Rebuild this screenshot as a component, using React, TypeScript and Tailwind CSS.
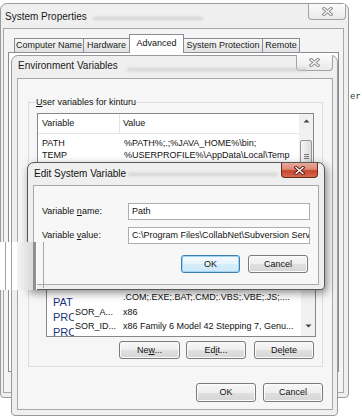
import React from "react";

const font = "font-['Liberation_Sans',Arial,sans-serif]";

function XGlyph({ red = false }: { red?: boolean }) {
  return (
    <svg width="11" height="9" viewBox="0 0 11 9">
      <path
        d="M2 1.5 L9 7.5 M9 1.5 L2 7.5"
        stroke={red ? "#5a1a10" : "#8c8c8c"}
        strokeWidth="3.2"
        strokeLinecap="square"
        fill="none"
      />
      <path
        d="M2 1.5 L9 7.5 M9 1.5 L2 7.5"
        stroke={red ? "#ffffff" : "#f6f6f6"}
        strokeWidth="1.4"
        strokeLinecap="square"
        fill="none"
      />
    </svg>
  );
}

function CloseBtn({ className }: { className: string }) {
  return (
    <div
      className={`${className} flex items-center justify-center rounded-b-[4px] border border-t-0 border-[#a3a3a3] bg-[linear-gradient(to_bottom,#fbfbfb,#e9e9e9)]`}
    >
      <XGlyph />
    </div>
  );
}

function RedClose({ className }: { className: string }) {
  return (
    <div
      className={`${className} flex items-center justify-center rounded-b-[4px] border border-t-0 border-[#6b2a1c] bg-[linear-gradient(to_bottom,#e9a99b_0%,#dc8a76_45%,#c7452c_55%,#d36a52_100%)]`}
    >
      <XGlyph red />
    </div>
  );
}

function Smudge({ className }: { className: string }) {
  return (
    <span
      className={`absolute h-[3px] rounded-full bg-[#c4c4c4] opacity-70 blur-[1.5px] ${className}`}
    />
  );
}

function Tab({
  className,
  children,
  selected = false,
}: {
  className: string;
  children: React.ReactNode;
  selected?: boolean;
}) {
  return (
    <div
      className={`${className} -ml-px flex items-center justify-center whitespace-nowrap border border-[#898c95] text-[9px] leading-[11px] ${
        selected
          ? "relative z-10 h-[19px] border-b-0 bg-white pb-[2px] text-[#111]"
          : "h-[15px] bg-[linear-gradient(to_bottom,#f6f6f6,#e2e2e2)] text-[#222]"
      }`}
    >
      {children}
    </div>
  );
}

function Btn({
  className,
  children,
  def = false,
}: {
  className: string;
  children: React.ReactNode;
  def?: boolean;
}) {
  return (
    <div
      className={`${className} flex items-center justify-center rounded-[3px] border text-[9px] leading-[11px] text-[#111] ${
        def
          ? "border-[#3c7fb1] bg-[linear-gradient(to_bottom,#f4fbff_0%,#e6f4fc_50%,#d6edfa_50%,#cde8f8_100%)] shadow-[inset_0_0_0_1px_#9fd4f3]"
          : "border-[#7a7a7a] bg-[linear-gradient(to_bottom,#f7f7f7_0%,#eeeeee_50%,#e0e0e0_50%,#d6d6d6_100%)] shadow-[inset_0_0_0_1px_#fbfbfb]"
      }`}
    >
      {children}
    </div>
  );
}

function UpArrow() {
  return (
    <svg width="7" height="4" viewBox="0 0 7 4">
      <path d="M0.5 3.5 L3.5 0.5 L6.5 3.5 Z" fill="#404040" />
    </svg>
  );
}

function DownArrow() {
  return (
    <svg width="7" height="4" viewBox="0 0 7 4">
      <path d="M0.5 0.5 L3.5 3.5 L6.5 0.5 Z" fill="#404040" />
    </svg>
  );
}

function SystemProperties() {
  return (
    <div className="absolute left-0 top-[3px] flex h-[395px] w-[349px] flex-col rounded-t-[7px] rounded-b-[4px] border border-[#9a9a9a] bg-[#efefef]">
      <div className="relative flex h-[24px] items-start">
        <span className="ml-[4px] mt-[7px] text-[10px] leading-[12px] text-[#1a1a1a]">
          System Properties
        </span>
        <Smudge className="left-[92px] top-[13px] w-[110px]" />
        <CloseBtn className="ml-auto mr-[2px] h-[16px] w-[38px]" />
      </div>
      <div className="ml-[2px] h-[365px] w-[341px] border border-[#a8a8a8] bg-[#f4f4f4]">
        <div className="ml-[11px] mt-[5px] flex h-[19px] items-end">
          <Tab className="w-[70px]">Computer Name</Tab>
          <Tab className="w-[47px]">Hardware</Tab>
          <Tab className="w-[55px]" selected>
            Advanced
          </Tab>
          <Tab className="w-[80px]">System Protection</Tab>
          <Tab className="w-[38px]">Remote</Tab>
        </div>
        <div className="-mt-px ml-[4px] h-[320px] w-[331px] border border-[#898c95] bg-white" />
      </div>
    </div>
  );
}

function EnvVars() {
  return (
    <div className="absolute left-[11px] top-[55px] flex h-[361px] w-[327px] flex-col rounded-t-[7px] rounded-b-[4px] border border-[#9a9a9a] bg-[#efefef]">
      <div className="relative flex h-[22px] items-start">
        <span className="ml-[6px] mt-[4px] text-[10px] leading-[12px] text-[#1a1a1a]">
          Environment Variables
        </span>
        <Smudge className="left-[115px] top-[12px] w-[180px]" />
        <CloseBtn className="-mt-px ml-auto mr-[4px] h-[16px] w-[37px]" />
      </div>
      <div className="ml-[5px] flex h-[332px] w-[316px] flex-col border border-[#a8a8a8] bg-[#f6f6f6]">
        {/* user variables */}
        <div className="relative ml-[10px] mt-[23px] h-[76px] w-[295px] shrink-0 border border-[#d5dfe5]">
          <span className="absolute left-[6px] top-[-7px] bg-[#f6f6f6] px-px text-[9px] leading-[12px]">
            <span className="underline">U</span>ser variables for kinturu
          </span>
          <div className="ml-[8px] mt-[10px] flex h-[62px] w-[277px] border border-[#828790] bg-white">
            <div className="flex flex-1 flex-col">
              <div className="flex h-[20px] border-b border-[#e5e5e5]">
                <div className="flex w-[82px] items-center border-r border-[#e5e5e5] pl-[4px]">
                  Variable
                </div>
                <div className="flex items-center pl-[3px]">Value</div>
              </div>
              <div className="pt-[3px]">
                <div className="flex h-[12px] items-center">
                  <span className="w-[86px] pl-[4px]">PATH</span>
                  <span>%PATH%;.;%JAVA_HOME%\bin;</span>
                </div>
                <div className="flex h-[12px] items-center">
                  <span className="w-[86px] pl-[4px]">TEMP</span>
                  <span>%USERPROFILE%\AppData\Local\Temp</span>
                </div>
              </div>
            </div>
            <div className="flex w-[14px] flex-col items-center bg-[#f0f0f0]">
              <div className="flex h-[17px] items-center justify-center">
                <UpArrow />
              </div>
              <div className="mt-[11px] flex h-[40px] w-[12px] flex-col items-center justify-center gap-[1px] rounded-[2px] border border-[#959595] bg-[linear-gradient(to_right,#f4f4f4,#dcdcdc)]">
                <span className="h-px w-[5px] bg-[#777]" />
                <span className="h-px w-[5px] bg-[#777]" />
                <span className="h-px w-[5px] bg-[#777]" />
              </div>
            </div>
          </div>
        </div>

        {/* system variables */}
        <div className="ml-[10px] mt-[10px] flex h-[179px] w-[295px] shrink-0 flex-col border border-[#d5dfe5]">
          <div className="relative ml-[17px] mt-[43px] flex h-[105px] w-[270px] overflow-hidden border border-[#828790] bg-white">
            <div className="flex flex-1 flex-col justify-end pb-[3px]">
              <div className="flex h-[15px] items-center">
                <span className="w-[76px]" />
                <span className="whitespace-nowrap">.COM;.EXE;.BAT;.CMD;.VBS;.VBE;.JS;....</span>
              </div>
              <div className="flex h-[14px] items-center">
                <span className="w-[76px] pl-[28px]">SOR_A...</span>
                <span>x86</span>
              </div>
              <div className="flex h-[14px] items-center">
                <span className="w-[76px] pl-[28px]">SOR_ID...</span>
                <span className="whitespace-nowrap">x86 Family 6 Model 42 Stepping 7, Genu...</span>
              </div>
            </div>
            <div className="flex w-[14px] flex-col items-center justify-end bg-[#f0f0f0]">
              <div className="h-[10px] w-[12px] rounded-b-[2px] border border-t-0 border-[#959595] bg-[linear-gradient(to_right,#f4f4f4,#dcdcdc)]" />
              <div className="flex-1" />
              <div className="flex h-[17px] items-center justify-center pb-[4px]">
                <DownArrow />
              </div>
            </div>
            <div className="absolute bottom-[-5px] left-[6px] h-[46px] w-[21px] overflow-hidden text-[11px] leading-[15px] text-[#22347e]">
              <div>PAT</div>
              <div>PRO</div>
              <div>PRO</div>
            </div>
          </div>
          <div className="mt-[4px] flex justify-end pr-[8px]">
            <Btn className="h-[18px] w-[61px]">
              <span>
                Ne<span className="underline">w</span>...
              </span>
            </Btn>
            <Btn className="ml-[6px] h-[18px] w-[60px]">
              <span>
                Ed<span className="underline">i</span>t...
              </span>
            </Btn>
            <Btn className="ml-[8px] h-[18px] w-[60px]">
              <span>
                De<span className="underline">l</span>ete
              </span>
            </Btn>
          </div>
        </div>

        <div className="mt-[16px] flex justify-end pr-[9px]">
          <Btn className="h-[19px] w-[60px]">OK</Btn>
          <Btn className="ml-[7px] h-[19px] w-[60px]">Cancel</Btn>
        </div>
      </div>
    </div>
  );
}

function EditDialog() {
  return (
    <div className="absolute left-[27px] top-[162px] flex h-[128px] w-[298px] flex-col rounded-t-[7px] rounded-b-[4px] border border-[#585858] bg-[#efefef] shadow-[2px_3px_8px_rgba(0,0,0,0.45)]">
      <div className="relative flex h-[22px] items-start">
        <span className="ml-[6px] mt-[5px] text-[10px] leading-[12px] text-[#111]">
          Edit System Variable
        </span>
        <Smudge className="left-[100px] top-[10px] w-[150px]" />
        <RedClose className="ml-auto mr-[6px] h-[15px] w-[37px]" />
      </div>
      <div className="ml-[5px] h-[100px] w-[286px] border border-[#a8a8a8] bg-[#f7f7f7]">
        <div className="mt-[17px] flex h-[17px] items-center">
          <span className="w-[94px] pl-[8px]">
            Variable <span className="underline">n</span>ame:
          </span>
          <div className="flex h-[17px] w-[182px] items-center border border-[#abadb3] bg-white pl-[3px]">
            Path
          </div>
        </div>
        <div className="mt-[7px] flex h-[17px] items-center">
          <span className="w-[94px] pl-[8px]">
            Variable <span className="underline">v</span>alue:
          </span>
          <div className="flex h-[17px] w-[182px] items-center overflow-hidden whitespace-nowrap border border-[#abadb3] bg-white pl-[3px]">
            C:\Program Files\CollabNet\Subversion Server
          </div>
        </div>
        <div className="mt-[11px] flex justify-end pr-[10px]">
          <Btn className="h-[18px] w-[59px]" def>
            OK
          </Btn>
          <Btn className="ml-[8px] h-[18px] w-[60px]">Cancel</Btn>
        </div>
      </div>
    </div>
  );
}

function Glitch() {
  return (
    <div className="absolute left-0 top-[242px] h-[48px] w-[37px] bg-white">
      <span className="absolute left-[5px] top-0 h-full w-px bg-[#a0a0a0]" />
      <span className="absolute left-[11px] top-0 h-full w-px bg-[#a0a0a0]" />
      <span className="absolute left-[17px] top-0 h-full w-[16px] bg-[linear-gradient(to_right,#f4f4f4,#dadada)]" />
      <span className="absolute left-[33px] top-0 h-full w-[3px] bg-[#8f8f8f]" />
    </div>
  );
}

export default function App() {
  return (
    <div className={`relative h-[420px] w-[362px] overflow-hidden bg-white ${font} text-[9px] leading-[11px] text-[#111]`}>
      <SystemProperties />
      <EnvVars />
      <EditDialog />
      <Glitch />
      <span className="absolute left-[43px] top-[242px] h-[46px] w-px bg-[#a8a8a8]" />
      <span className="absolute left-[350px] top-[92px] font-['Liberation_Mono',monospace] text-[9px] leading-[11px] text-[#333]">
        er
      </span>
    </div>
  );
}
